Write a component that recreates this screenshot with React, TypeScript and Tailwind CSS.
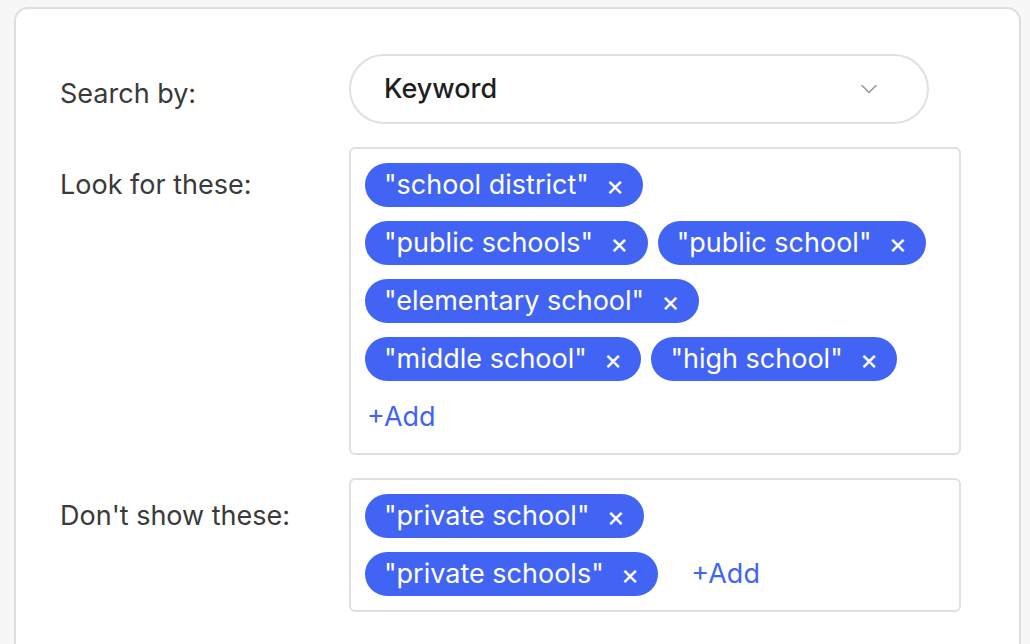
import { ChevronDown } from "lucide-react";

const lookFor = [
  "school district",
  "public schools",
  "public school",
  "elementary school",
  "middle school",
  "high school",
];

const dontShow = ["private school", "private schools"];

function Chip({ label }: { label: string }) {
  return (
    <span className="flex h-[44px] items-center rounded-full bg-[#4264f4] pl-[19px] pr-[19px] text-[27px] text-white">
      <span>"{label}"</span>
      <span className="ml-[17px] text-[28px] leading-none">×</span>
    </span>
  );
}

function TagBox({ tags, addClass }: { tags: string[]; addClass: string }) {
  return (
    <div className="flex w-[612px] flex-wrap gap-x-[10px] gap-y-[14px] rounded-[6px] border-2 border-[#e0e0e0] pl-[14px] pr-[30px] pt-[14px] pb-[14px]">
      {tags.map((t) => (
        <Chip key={t} label={t} />
      ))}
      <button className={"flex h-[44px] items-center text-[27px] text-[#4264f4] " + addClass}>+Add</button>
    </div>
  );
}

export default function App() {
  return (
    <div className="h-[644px] overflow-hidden bg-[#f7f7f7] pl-[14px] pr-[9px] pt-[7px]" style={{ fontFamily: "Inter, 'Liberation Sans', sans-serif" }}>
      <div className="h-[700px] rounded-[14px] border-2 border-[#dedede] bg-white pl-[44px] pt-[45px]">
        <div className="flex items-center">
          <div className="w-[289px] pt-[10px] text-[27px] text-[#3a3a3a]">Search by:</div>
          <div className="flex h-[70px] w-[580px] items-center justify-between rounded-full border-2 border-[#e0e0e0] pl-[33px] pr-[44px]">
            <span className="text-[27px] font-medium text-[#1f1f1f]">Keyword</span>
            <ChevronDown className="h-[28px] w-[28px] text-[#9a9a9a]" strokeWidth={1.4} />
          </div>
        </div>

        <div className="mt-[23px] flex items-start">
          <div className="flex h-[76px] w-[289px] items-center text-[27px] text-[#3a3a3a]">Look for these:</div>
          <TagBox tags={lookFor} addClass="pl-[2px]" />
        </div>

        <div className="mt-[23px] flex items-start">
          <div className="flex h-[76px] w-[289px] items-center text-[27px] text-[#3a3a3a]">Don't show these:</div>
          <TagBox tags={dontShow} addClass="ml-[23px]" />
        </div>
      </div>
    </div>
  );
}
